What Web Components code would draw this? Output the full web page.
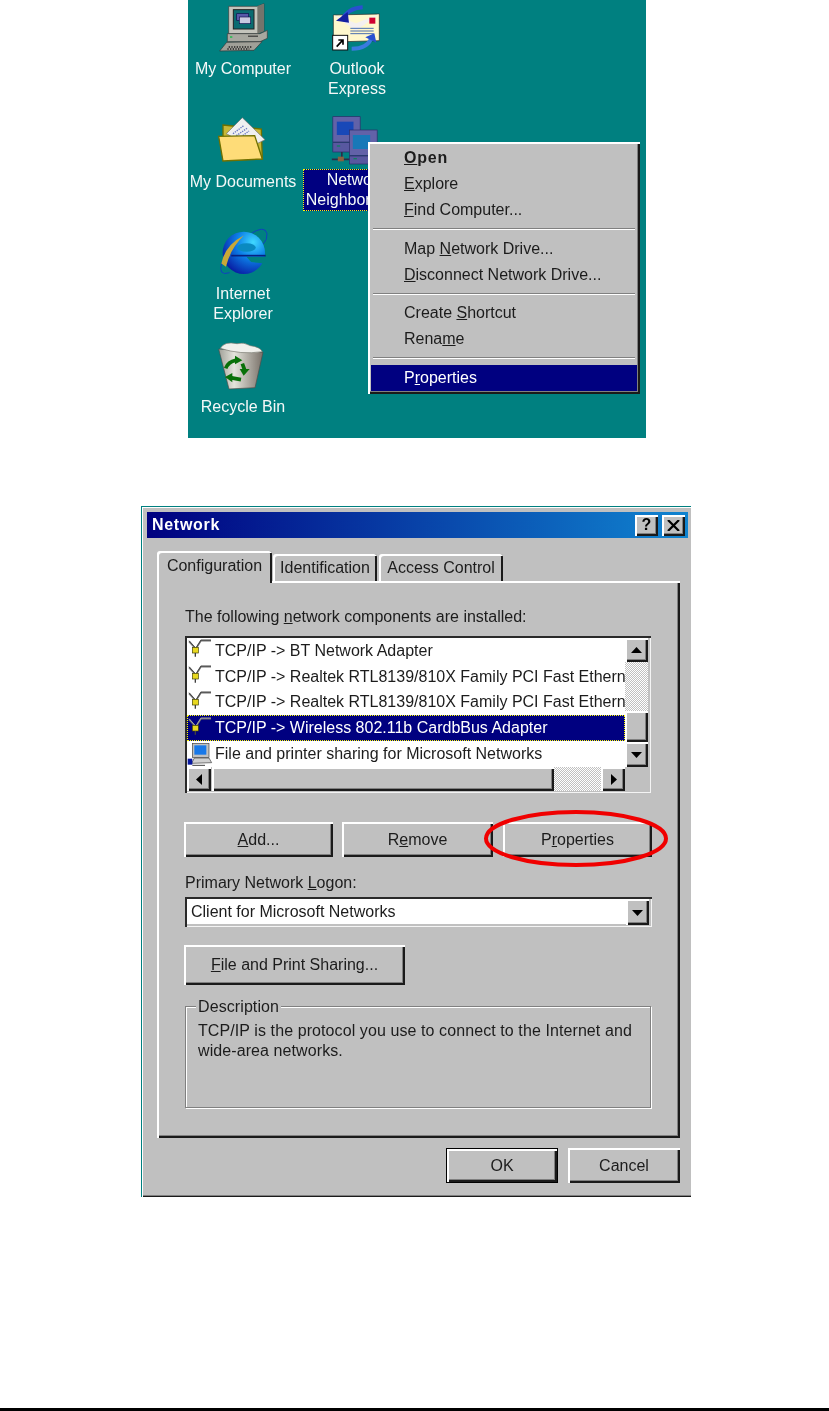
<!DOCTYPE html>
<html>
<head>
<meta charset="utf-8">
<title>Network setup</title>
<style>
html,body{margin:0;background:#fff;overflow:hidden;}
body{font-family:"Liberation Sans",Arial,sans-serif;font-size:16px;color:#1c1c1c;}
</style>
</head>
<body>
<manual-page>
	<win-desktop>
		<desk-icon style="left:0;top:3px;--gap:6px" label="My Computer">
			<svg viewBox="93 8 147 147" width="49" height="49">
				<polygon points="122,18 208,18 228,10 228,92 208,100 122,100" fill="#c4c4bc" stroke="#3a3a3a" stroke-width="2"/>
				<polygon points="208,18 228,10 228,92 208,100" fill="#74746c"/>
				<rect x="136" y="28" width="62" height="58" fill="#0a6a70" stroke="#222" stroke-width="3"/>
				<rect x="146" y="40" width="36" height="20" fill="#5858a8" stroke="#101050" stroke-width="2"/>
				<rect x="154" y="50" width="34" height="20" fill="#c8c8e0" stroke="#101050" stroke-width="2"/>
				<polygon points="118,100 216,100 238,90 238,114 216,124 118,124" fill="#a8a8a0" stroke="#3a3a3a" stroke-width="2"/>
				<rect x="180" y="106" width="30" height="3" fill="#222"/>
				<rect x="126" y="108" width="7" height="4" fill="#10c040"/>
				<polygon points="116,126 222,124 198,150 95,152" fill="#a0a098" stroke="#333" stroke-width="2"/>
				<path d="M122 140h70M118 146h66" stroke="#222" stroke-width="4" stroke-dasharray="4 4"/>
			</svg>
		</desk-icon>
		<desk-icon style="left:114px;top:4px;--gap:5px" label="Outlook<br>Express">
			<svg viewBox="430 12 150 147" width="50" height="49" style="margin-right:3px">
				<polygon points="437,45 575,42 575,122 437,126" fill="#fff8cc" stroke="#222" stroke-width="2"/>
				<polygon points="437,45 505,92 575,42 505,70" fill="#f4f0f0"/>
				<path d="M488 85h70M488 93h70M488 101h70" stroke="#4a6fb0" stroke-width="3"/>
				<rect x="545" y="53" width="18" height="18" fill="#d00030"/>
				<path d="M462 62Q480 24 525 22" fill="none" stroke="#2a50d0" stroke-width="12"/>
				<polygon points="445,62 480,36 484,68" fill="#1420a0"/>
				<path d="M492 146Q540 146 552 112" fill="none" stroke="#3a7ae0" stroke-width="12"/>
				<polygon points="533,112 560,100 566,128" fill="#2a50d0"/>
				<rect x="435" y="106" width="45" height="44" fill="#fff" stroke="#111" stroke-width="3"/>
				<path d="M447 140L464 122M452 120h14v14" fill="none" stroke="#000" stroke-width="5"/>
			</svg>
		</desk-icon>
		<desk-icon style="left:0;top:117px;--gap:8px" label="My Documents">
			<svg viewBox="95 352 144 138" width="48" height="46" style="margin-right:2px">
				<polygon points="110,376 225,388 228,478 110,482" fill="#c8b838" stroke="#707000" stroke-width="4"/>
				<polygon points="120,402 168,354 236,420 192,442" fill="#f0f0f0" stroke="#707070" stroke-width="2"/>
				<path d="M140 402L172 378M150 408L182 386M158 416L188 394" stroke="#6878c0" stroke-width="4" stroke-dasharray="4 3"/>
				<polygon points="97,410 205,408 228,478 110,484" fill="#fedc78" stroke="#707000" stroke-width="4"/>
			</svg>
		</desk-icon>
		<desk-icon style="left:113px;top:116px;--gap:5px" label="Network<br>Neighborhood" selected>
			<svg viewBox="430 348 140 147" width="47" height="49" style="margin-right:4px">
				<rect x="435" y="350" width="82" height="76" fill="#6262a8" stroke="#2c2c68" stroke-width="2"/>
				<rect x="447" y="365" width="50" height="40" fill="#1848b8"/>
				<rect x="435" y="428" width="76" height="28" fill="#5858a0" stroke="#2c2c68" stroke-width="2"/>
				<rect x="447" y="436" width="10" height="4" fill="#108060"/>
				<path d="M432 478H490M462 456V478" stroke="#2c2c48" stroke-width="5"/>
				<rect x="450" y="470" width="18" height="14" fill="#8a6040"/>
				<rect x="485" y="390" width="83" height="76" fill="#6262a8" stroke="#2c2c68" stroke-width="2"/>
				<rect x="495" y="405" width="52" height="42" fill="#1878b8"/>
				<rect x="485" y="468" width="70" height="24" fill="#5858a0" stroke="#2c2c68" stroke-width="2"/>
				<rect x="497" y="474" width="10" height="4" fill="#108060"/>
			</svg>
		</desk-icon>
		<desk-icon style="left:0;top:228px;--gap:7px" label="Internet<br>Explorer">
			<svg viewBox="93 25 148 145" width="49" height="48">
				<defs>
					<radialGradient id="ie" cx=".72" cy=".25" r=".85">
						<stop offset="0" stop-color="#40d8ff"/>
						<stop offset=".45" stop-color="#0c80e8"/>
						<stop offset="1" stop-color="#0818a0"/>
					</radialGradient>
				</defs>
				<path d="M125 160Q88 172 102 128" fill="none" stroke="#1040c0" stroke-width="3"/>
				<path d="M186 44Q232 14 238 42Q240 60 226 74" fill="none" stroke="#1040c0" stroke-width="3"/>
				<circle cx="168" cy="100" r="64" fill="url(#ie)"/>
				<ellipse cx="176" cy="84" rx="28" ry="13" fill="#0a8ac0"/>
				<polygon points="232,112 176,112 190,128 232,132" fill="#008080"/>
				<rect x="130" y="106" width="104" height="5" fill="#082080"/>
				<path d="M100 132Q112 76 168 48Q128 86 114 142Z" fill="#c8a838"/>
			</svg>
		</desk-icon>
		<desk-icon style="left:0;top:341px;--gap:6px" label="Recycle Bin">
			<svg viewBox="93 362 138 147" width="46" height="49" style="margin-right:4px">
				<defs>
					<linearGradient id="bin" x1="0" x2="1">
						<stop offset="0" stop-color="#a0a098"/>
						<stop offset=".35" stop-color="#e4e4dc"/>
						<stop offset="1" stop-color="#787068"/>
					</linearGradient>
				</defs>
				<polygon points="95,386 228,396 204,502 126,506" fill="url(#bin)" stroke="#504c48" stroke-width="2"/>
				<path d="M100 384Q112 362 150 370Q170 364 190 376Q220 380 226 394Q160 404 100 384Z" fill="#f0f0ec" stroke="#787870" stroke-width="2"/>
				<path d="M116 444Q124 424 146 420M166 430L174 452M162 478L130 472" fill="none" stroke="#087008" stroke-width="11"/>
				<polygon points="144,406 166,420 144,432" fill="#087008"/>
				<polygon points="158,446 188,446 170,466" fill="#087008"/>
				<polygon points="136,458 136,486 114,470" fill="#087008"/>
			</svg>
		</desk-icon>
		<context-menu>
			<menu-item bold><u>O</u>pen</menu-item>
			<menu-item><u>E</u>xplore</menu-item>
			<menu-item><u>F</u>ind Computer...</menu-item>
			<menu-line></menu-line>
			<menu-item>Map <u>N</u>etwork Drive...</menu-item>
			<menu-item><u>D</u>isconnect Network Drive...</menu-item>
			<menu-line></menu-line>
			<menu-item>Create <u>S</u>hortcut</menu-item>
			<menu-item>Rena<u>m</u>e</menu-item>
			<menu-line></menu-line>
			<menu-item active>P<u>r</u>operties</menu-item>
		</context-menu>
	</win-desktop>

	<win-dialog heading="Network">
		<win-tabs>
			<tab-label active style="width:115px">Configuration</tab-label>
			<tab-label style="width:104px">Identification</tab-label>
			<tab-label style="width:124px;margin-left:1px">Access Control</tab-label>
		</win-tabs>
		<tab-panel>
			<field-label>The following <u>n</u>etwork components are installed:</field-label>
			<list-box>
				<list-row icon="net">TCP/IP -&gt; BT Network Adapter</list-row>
				<list-row icon="net">TCP/IP -&gt; Realtek RTL8139/810X Family PCI Fast Ethernet NIC</list-row>
				<list-row icon="net">TCP/IP -&gt; Realtek RTL8139/810X Family PCI Fast Ethernet NIC</list-row>
				<list-row icon="net" selected>TCP/IP -&gt; Wireless 802.11b CardbBus Adapter</list-row>
				<list-row icon="pc">File and printer sharing for Microsoft Networks</list-row>
			</list-box>
			<button-row>
				<win-button style="width:149px"><u>A</u>dd...</win-button>
				<win-button style="width:151px;margin-left:9px">R<u>e</u>move</win-button>
				<win-button style="width:149px;margin-left:10px">P<u>r</u>operties</win-button>
				<red-ring></red-ring>
			</button-row>
			<field-label style="margin-top:16px">Primary Network <u>L</u>ogon:</field-label>
			<combo-box>Client for Microsoft Networks</combo-box>
			<win-button style="width:221px;height:40px;margin:18px 0 0 -1px"><u>F</u>ile and Print Sharing...</win-button>
			<group-box heading="Description">TCP/IP is the protocol you use to connect to the Internet and wide-area networks.</group-box>
		</tab-panel>
		<dialog-footer>
			<win-button style="width:112px" default>OK</win-button>
			<win-button style="width:112px;margin-left:10px">Cancel</win-button>
		</dialog-footer>
	</win-dialog>

	<page-rule></page-rule>
</manual-page>

<script>
const RAISED = 'box-shadow: inset 2px 2px 0 #fff, inset -2px -2px 0 #1a1a1a, inset -3px -3px 0 #808080;';

class WinElement extends HTMLElement {
	static get styles() { return ''; }
	static get markup() { return '<slot></slot>'; }

	constructor() {
		super();
		const template = document.createElement('template');
		template.innerHTML = `<style>${this.constructor.styles}</style>` + this.constructor.markup;
		this.attachShadow({ mode: 'open' });
		this.shadowRoot.appendChild(template.content.cloneNode(true));
	}
}

class ManualPage extends WinElement {
	static get styles() {
		return `:host{display:flex;flex-direction:column;align-items:flex-start;width:829px;height:1411px;}`;
	}
}

class PageRule extends WinElement {
	static get styles() {
		return `:host{display:block;align-self:stretch;height:3px;margin-top:auto;background:#000;}`;
	}
	static get markup() { return ''; }
}

class WinDesktop extends WinElement {
	static get styles() {
		return `:host{display:block;position:relative;width:458px;height:438px;margin-left:188px;background:#008080;overflow:hidden;filter:blur(.35px);}`;
	}
}

class DeskIcon extends WinElement {
	static get styles() {
		return `
		:host{position:absolute;display:flex;flex-direction:column;align-items:center;width:110px;color:#f4f8f8;line-height:20px;text-align:center;}
		.label{margin-top:var(--gap,6px);padding:0 2px;border:1px solid transparent;white-space:nowrap;}
		:host([selected]) .label{background:#000080;border:1px dotted #ff0;margin-top:4px;}
		::slotted(svg){display:block;}
		`;
	}
	static get markup() { return `<slot></slot><div class="label"></div>`; }

	connectedCallback() {
		this.shadowRoot.querySelector('.label').innerHTML = this.getAttribute('label');
	}
}

class ContextMenu extends WinElement {
	static get styles() {
		return `:host{position:absolute;left:180px;top:142px;display:flex;flex-direction:column;box-sizing:border-box;width:272px;height:252px;padding:3px;background:#c0c0c0;${RAISED}}`;
	}
}

class MenuItem extends WinElement {
	static get styles() {
		return `
		:host{display:flex;align-items:center;height:26px;padding-left:33px;color:#1c1c1c;}
		:host([bold]){font-weight:bold;letter-spacing:.8px;}
		:host([active]){background:#000080;color:#fff;}
		`;
	}
	static get markup() { return '<span><slot></slot></span>'; }
}

class MenuLine extends WinElement {
	static get styles() {
		return `:host{display:block;height:2px;margin:5px 2px 5.5px;background:#808080;border-bottom:1px solid #fff;box-sizing:border-box;}`;
	}
	static get markup() { return ''; }
}

class WinDialog extends WinElement {
	static get styles() {
		return `
		:host{display:flex;flex-direction:column;box-sizing:border-box;width:550px;height:691px;margin:68px 0 0 141px;padding:5px 3px 0 5px;background:#c0c0c0;border-left:1px solid #008080;border-top:1px solid #008080;box-shadow:inset 1px 1px 0 #fff,inset 0 -1px 0 #1a1a1a,inset 0 -2px 0 #808080;filter:blur(.35px);}
		.title{display:flex;align-items:center;flex:none;height:26px;padding:0 3px 0 5px;background:linear-gradient(90deg,#000080,#1084d0);color:#fff;font-weight:bold;}
		.title span{flex:1;letter-spacing:.7px;}
		.cap{display:flex;align-items:center;justify-content:center;width:23px;height:21px;margin-left:4px;background:#c0c0c0;color:#000;${RAISED}}
		.cap svg{display:block;}
		.body{display:flex;flex-direction:column;padding:13px 0 0 10px;}
		`;
	}
	static get markup() {
		return `
		<div class="title">
			<span></span>
			<div class="cap" style="font-weight:bold">?</div>
			<div class="cap"><svg width="13" height="11" viewBox="0 0 13 11"><path d="M1 0l11 11M12 0L1 11" stroke="#000" stroke-width="2.2"/></svg></div>
		</div>
		<div class="body"><slot></slot></div>
		`;
	}

	connectedCallback() {
		this.shadowRoot.querySelector('.title span').textContent = this.getAttribute('heading');
	}
}

class WinTabs extends WinElement {
	static get styles() {
		return `:host{display:flex;align-items:flex-end;height:30px;position:relative;z-index:1;}`;
	}
}

class TabLabel extends WinElement {
	static get styles() {
		return `
		:host{display:flex;flex:none;align-items:center;justify-content:center;box-sizing:border-box;height:27px;margin-right:1px;background:#c0c0c0;border-radius:3px 3px 0 0;box-shadow:inset 2px 2px 0 #fff,inset -2px 0 0 #1a1a1a;}
		:host([active]){height:32px;padding-bottom:3px;margin-bottom:-2px;}
		`;
	}
	static get markup() { return '<span><slot></slot></span>'; }
}

class TabPanel extends WinElement {
	static get styles() {
		return `:host{display:flex;flex-direction:column;align-items:flex-start;box-sizing:border-box;width:523px;height:557px;padding:26px 0 0 28px;background:#c0c0c0;box-shadow:inset 2px 2px 0 #fff,inset -2px -2px 0 #1a1a1a,inset -3px -3px 0 #808080;}`;
	}
}

class FieldLabel extends WinElement {
	static get styles() { return `:host{display:block;height:20px;line-height:20px;white-space:nowrap;}`; }
}

class ListBox extends WinElement {
	static get styles() {
		return `
		:host{display:grid;grid-template-columns:438px 23px;grid-template-rows:129px 24px;box-sizing:border-box;width:466px;height:157px;margin-top:9px;padding:2px 3px 2px 2px;background:#c0c0c0;box-shadow:inset 2px 2px 0 #2a2a2a,inset -1px -1px 0 #f4f4f4;}
		.rows{background:#fff;overflow:hidden;}
		.vbar,.hbar{display:flex;}
		.vbar{flex-direction:column;}
		.track{flex:1;background:repeating-conic-gradient(#fff 0 25%,#c0c0c0 0 50%) 0 0/2px 2px;}
		.thumb{flex:none;background:#c0c0c0;${RAISED}}
		.vbar .thumb{height:31px;}
		.hbar .thumb{width:342px;margin-left:1px;}
		.corner{background:#c0c0c0;}
		`;
	}
	static get markup() {
		return `
		<div class="rows"><slot></slot></div>
		<div class="vbar">
			<scroll-button dir="up" style="height:24px"></scroll-button>
			<div class="track"></div>
			<div class="thumb"></div>
			<scroll-button dir="down" style="height:25px"></scroll-button>
		</div>
		<div class="hbar">
			<scroll-button dir="left" style="width:24px"></scroll-button>
			<div class="thumb"></div>
			<div class="track"></div>
			<scroll-button dir="right" style="width:24px"></scroll-button>
		</div>
		<div class="corner"></div>
		`;
	}
}

class ScrollButton extends WinElement {
	static get styles() {
		return `:host{display:flex;flex:none;align-items:center;justify-content:center;background:#c0c0c0;${RAISED}} svg{display:block;}`;
	}
	static get markup() { return '<svg width="11" height="11" viewBox="0 0 11 11"><polygon fill="#000"/></svg>'; }

	connectedCallback() {
		const shapes = { up: '5.5,2 11,8 0,8', down: '0,3 11,3 5.5,9', left: '8,0 8,11 2,5.5', right: '3,0 3,11 9,5.5' };
		this.shadowRoot.querySelector('polygon').setAttribute('points', shapes[this.getAttribute('dir')]);
	}
}

class ListRow extends WinElement {
	static get styles() {
		return `
		:host{display:flex;align-items:center;box-sizing:border-box;height:25.8px;white-space:nowrap;background:#fff;color:#1c1c1c;}
		:host([selected]){background:#000080;color:#fff;outline:1px dotted #ff0;outline-offset:-1px;}
		.icon{flex:none;width:28px;height:25px;}
		svg{display:block;}
		`;
	}
	static get markup() { return `<div class="icon"></div><span><slot></slot></span>`; }

	connectedCallback() {
		const net = `<svg width="26" height="24" viewBox="36 28 78 72">
			<path d="M42 38L60 58M108 36H78L64 58" fill="none" stroke="#707070" stroke-width="5"/>
			<path d="M42 36L60 56M108 34H78L64 56" fill="none" stroke="${this.hasAttribute('selected') ? '#c0c0c0' : '#303030'}" stroke-width="2"/>
			<rect x="52" y="56" width="18" height="17" fill="#e8d820" stroke="#404000" stroke-width="2"/>
			<path d="M61 73V84" stroke="#404040" stroke-width="4"/>
		</svg>`;
		const pc = `<svg width="26" height="25" viewBox="34 328 78 75">
			<rect x="50" y="332" width="50" height="42" fill="#c0c0c0" stroke="#404040" stroke-width="2"/>
			<rect x="56" y="338" width="36" height="28" fill="#1878e8"/>
			<polygon points="56,376 100,376 108,390 48,392" fill="#d0d0d0" stroke="#404040" stroke-width="2"/>
			<rect x="36" y="378" width="14" height="18" fill="#0818a0"/>
			<path d="M50 398H88" stroke="#404040" stroke-width="3"/>
		</svg>`;
		this.shadowRoot.querySelector('.icon').innerHTML = this.getAttribute('icon') === 'pc' ? pc : net;
	}
}

class ButtonRow extends WinElement {
	static get styles() { return `:host{display:flex;position:relative;margin:29px 0 0 -1px;}`; }
}

class WinButton extends WinElement {
	static get styles() {
		return `
		:host{display:flex;align-items:center;justify-content:center;box-sizing:border-box;height:35px;background:#c0c0c0;white-space:nowrap;${RAISED}}
		:host([default]){box-shadow:0 0 0 1px #000 inset,inset 3px 3px 0 #fff,inset -3px -3px 0 #1a1a1a,inset -4px -4px 0 #808080;}
		`;
	}
	static get markup() { return '<span><slot></slot></span>'; }
}

class RedRing extends WinElement {
	static get styles() {
		return `:host{position:absolute;left:300px;top:-12px;display:block;width:184px;height:57px;} svg{display:block;overflow:visible;}`;
	}
	static get markup() {
		return '<svg width="184" height="57" viewBox="0 0 184 57"><ellipse cx="92" cy="28.5" rx="90" ry="26.5" fill="none" stroke="#f00000" stroke-width="4"/></svg>';
	}
}

class ComboBox extends WinElement {
	static get styles() {
		return `
		:host{display:flex;align-items:center;justify-content:space-between;box-sizing:border-box;width:467px;height:30px;margin-top:4px;padding:2px 3px 2px 6px;background:#fff;white-space:nowrap;box-shadow:inset 2px 2px 0 #2a2a2a,inset -1px -1px 0 #f4f4f4,inset -3px -3px 0 #c0c0c0;}
		scroll-button{width:23px;height:26px;}
		`;
	}
	static get markup() { return `<span><slot></slot></span><scroll-button dir="down"></scroll-button>`; }
}

class GroupBox extends WinElement {
	static get styles() {
		return `
		:host{display:block;box-sizing:border-box;width:466px;height:102px;margin-top:21px;padding:0 12px;border:1px solid #808080;box-shadow:inset 1px 1px 0 #fff,1px 1px 0 #fff;line-height:20px;letter-spacing:.09px;}
		.legend{width:fit-content;height:20px;margin:-10px 0 4px -2px;padding:0 2px;background:#c0c0c0;}
		`;
	}
	static get markup() { return `<div class="legend"></div><slot></slot>`; }

	connectedCallback() {
		this.shadowRoot.querySelector('.legend').textContent = this.getAttribute('heading');
	}
}

class DialogFooter extends WinElement {
	static get styles() { return `:host{display:flex;width:523px;justify-content:flex-end;margin-top:10px;}`; }
}

customElements.define('manual-page', ManualPage);
customElements.define('page-rule', PageRule);
customElements.define('win-desktop', WinDesktop);
customElements.define('desk-icon', DeskIcon);
customElements.define('context-menu', ContextMenu);
customElements.define('menu-item', MenuItem);
customElements.define('menu-line', MenuLine);
customElements.define('win-dialog', WinDialog);
customElements.define('win-tabs', WinTabs);
customElements.define('tab-label', TabLabel);
customElements.define('tab-panel', TabPanel);
customElements.define('field-label', FieldLabel);
customElements.define('list-box', ListBox);
customElements.define('scroll-button', ScrollButton);
customElements.define('list-row', ListRow);
customElements.define('button-row', ButtonRow);
customElements.define('win-button', WinButton);
customElements.define('red-ring', RedRing);
customElements.define('combo-box', ComboBox);
customElements.define('group-box', GroupBox);
customElements.define('dialog-footer', DialogFooter);
</script>
</body>
</html>
